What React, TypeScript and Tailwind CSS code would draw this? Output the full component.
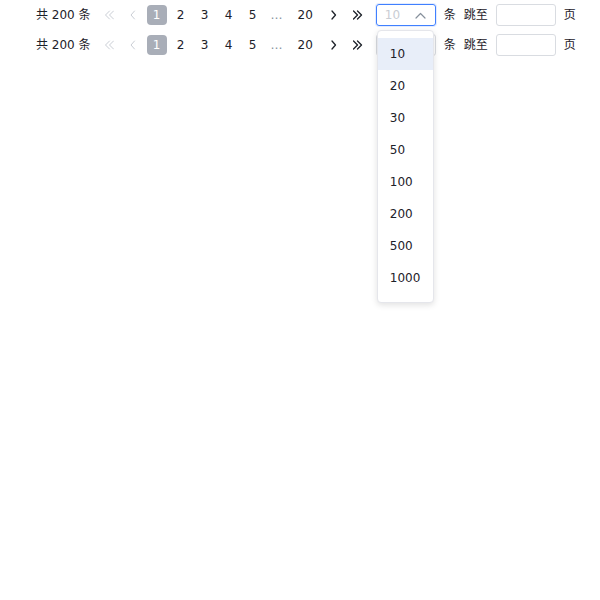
import React from "react";

const pages = ["1", "2", "3", "4", "5"];
const sizes = ["10", "20", "30", "50", "100", "200", "500", "1000"];

function DoubleArrow({ dir, muted }: { dir: "left" | "right"; muted?: boolean }) {
  const d =
    dir === "left"
      ? "M5.5 1 L1.5 5 L5.5 9 M9.5 1 L5.5 5 L9.5 9"
      : "M0.5 1 L4.5 5 L0.5 9 M4.5 1 L8.5 5 L4.5 9";
  return (
    <svg width="10" height="10" viewBox="0 0 10 10" fill="none" className={muted ? "text-[#c9cdd4]" : "text-[#1d2129]"}>
      <path d={d} stroke="currentColor" strokeWidth={muted ? 1 : 1.3} strokeLinecap="round" strokeLinejoin="round" />
    </svg>
  );
}

function SingleArrow({ dir, muted }: { dir: "left" | "right"; muted?: boolean }) {
  const d = dir === "left" ? "M4.5 1 L1 5 L4.5 9" : "M1 1 L4.5 5 L1 9";
  return (
    <svg width="6" height="10" viewBox="0 0 6 10" fill="none" className={muted ? "text-[#c9cdd4]" : "text-[#1d2129]"}>
      <path d={d} stroke="currentColor" strokeWidth={muted ? 1 : 1.3} strokeLinecap="round" strokeLinejoin="round" />
    </svg>
  );
}

function Pager({ open }: { open?: boolean }) {
  return (
    <div className="flex h-[22px] items-center gap-2 text-xs text-[#1d2129]">
      <span className="whitespace-pre">共 200 条</span>
      <div className="flex items-center gap-1">
        <span className="flex h-5 w-5 items-center justify-center">
          <DoubleArrow dir="left" muted />
        </span>
        <span className="flex h-5 w-5 items-center justify-center">
          <SingleArrow dir="left" muted />
        </span>
        {pages.map((p, i) => (
          <span
            key={p}
            className={
              i === 0
                ? "flex h-5 w-5 items-center justify-center rounded-sm bg-[#a9aeb8] text-white"
                : "flex h-5 w-5 items-center justify-center"
            }
          >
            {p}
          </span>
        ))}
        <span className="flex h-5 w-5 items-center justify-center text-[#86909c]">…</span>
        <span className="flex h-5 min-w-5 items-center justify-center px-[7px]">20</span>
        <span className="flex h-5 w-5 items-center justify-center">
          <SingleArrow dir="right" />
        </span>
        <span className="flex h-5 w-5 items-center justify-center">
          <DoubleArrow dir="right" />
        </span>
      </div>
      <div className="relative">
        <div
          className={
            open
              ? "flex h-[22px] w-[60px] items-center justify-between rounded-[3px] border border-[#4080ff] pl-2 pr-[9px] shadow-[0_0_0_1px_rgba(64,128,255,0.15)]"
              : "flex h-[22px] w-[60px] items-center justify-between rounded-[3px] border border-[#d9dce1] pl-2 pr-[9px]"
          }
        >
          <span className={open ? "text-[#c9cdd4]" : ""}>10</span>
          <svg width="11" height="7" viewBox="0 0 11 7" fill="none" className="text-[#86909c]">
            <path
              d={open ? "M1 6 L5.5 1.5 L10 6" : "M1 1 L5.5 5.5 L10 1"}
              stroke="currentColor"
              strokeWidth="1.2"
              strokeLinecap="round"
              strokeLinejoin="round"
            />
          </svg>
        </div>
        {open && (
          <div className="absolute left-px top-[26px] z-10 w-[57px] rounded-[4px] border border-[#e5e6eb] bg-white pb-2 pt-[7px] shadow-[0_2px_6px_rgba(0,0,0,0.12)]">
            {sizes.map((s, i) => (
              <div
                key={s}
                className={
                  i === 0
                    ? "flex h-8 items-center bg-[#e8eef9] pl-3"
                    : "flex h-8 items-center pl-3"
                }
              >
                {s}
              </div>
            ))}
          </div>
        )}
      </div>
      <span>条</span>
      <span>跳至</span>
      <div className="h-[22px] w-[60px] rounded-[3px] border border-[#d9dce1]" />
      <span>页</span>
    </div>
  );
}

export default function App() {
  return (
    <div
      className="flex min-h-[600px] flex-col gap-2 bg-white pl-9 pt-1"
      style={{ fontFamily: '"DejaVu Sans", "Noto Sans CJK SC", sans-serif' }}
    >
      <div className="relative z-10">
        <Pager open />
      </div>
      <Pager />
    </div>
  );
}
